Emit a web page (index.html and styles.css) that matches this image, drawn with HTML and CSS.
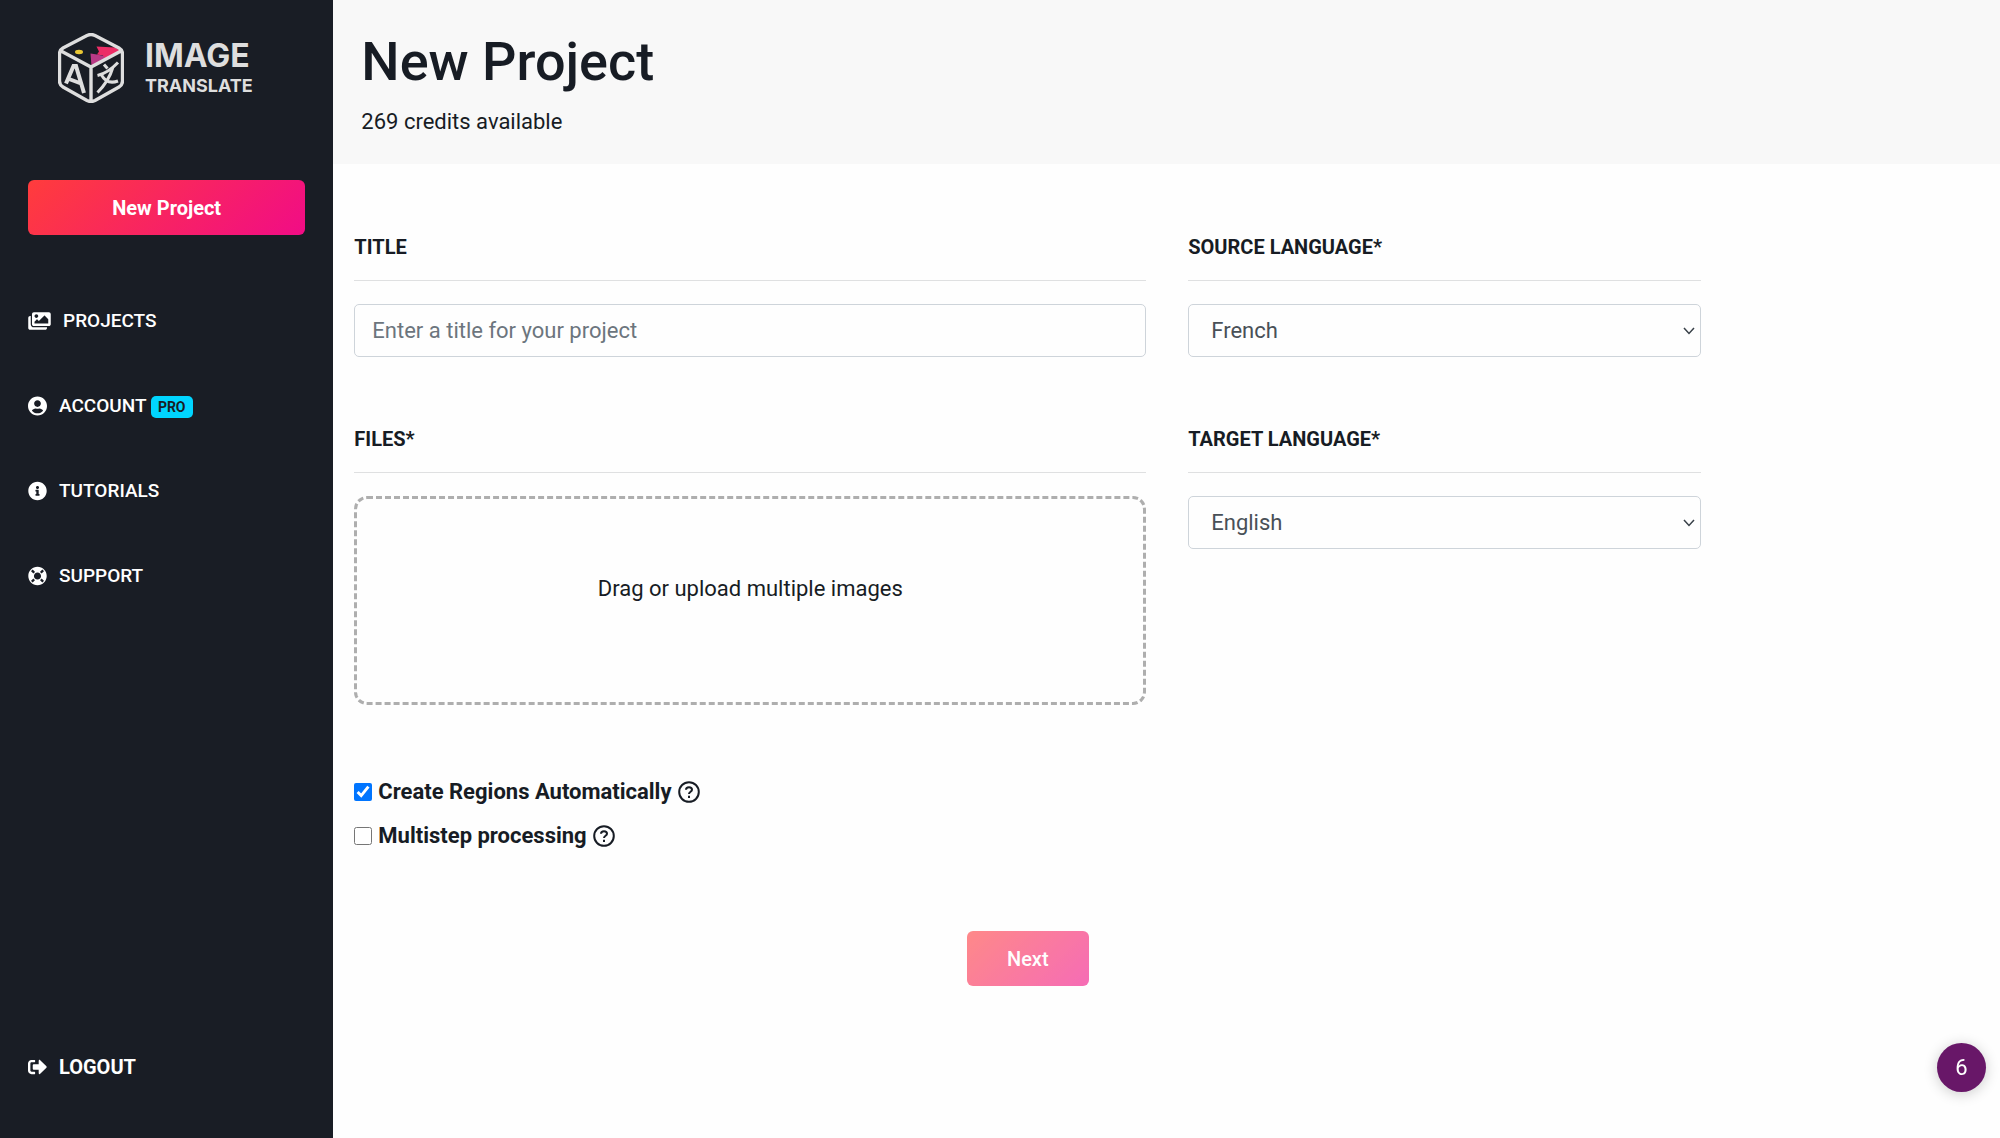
FILE: index.html
```html
<!DOCTYPE html>
<html lang="en">
<head>
<meta charset="UTF-8">
<meta name="viewport" content="width=device-width, initial-scale=1.0">
<title>Image Translate - New Project</title>
<link rel="stylesheet" href="styles.css">
</head>
<body>

<div class="layout">
    <aside class="sidebar">
        <a class="logo" href="#">
            <svg class="logo-mark" viewBox="0 0 66 70" aria-hidden="true">
                <path d="M38.500 13.500L57 14.500L63 18L46 27L45 22.500L39 21.500L41 18.500z" fill="#ec2d66"/>
                <path d="M32.500 20.500L39 21.500L46 23L47 26L33.500 33.500z" fill="#b93a86"/>
                <ellipse cx="21" cy="19" rx="4" ry="2.200" fill="#e9c734"/>
                <path d="M29 2.500Q33 .5 37 2.500L61 15Q64.500 17 64.500 21V48Q64.500 52 61 54L37 67.500Q33 69.500 29 67.500L5 54Q1.500 52 1.500 48V21Q1.500 17 5 15zM3 18L33 34L63 18M33 34V68" fill="none" stroke="#dedede" stroke-width="3.400"/>
                <path d="M8 50.500L15.500 33H18L26 60M11 46L23 50.500" fill="none" stroke="#dedede" stroke-width="4"/>
                <path d="M46 31.500L49.500 35.500M39.500 42.500Q50 40 60 29.500M55 34Q51 48 39.500 59.500M43.500 42Q49 52 60 48" fill="none" stroke="#dedede" stroke-width="3"/>
            </svg>
            <span class="logo-text">
                <span class="logo-top">IMAGE</span>
                <span class="logo-bottom">TRANSLATE</span>
            </span>
        </a>

        <button type="button" class="btn btn-new">New Project</button>

        <nav class="menu">
            <a href="#">
                <svg class="icon icon-wide" viewBox="0 0 576 512" aria-hidden="true"><path d="M480 416v16c0 26.510-21.490 48-48 48H48c-26.510 0-48-21.490-48-48V176c0-26.510 21.490-48 48-48h16v208c0 44.112 35.888 80 80 80h336zm96-80V80c0-26.510-21.490-48-48-48H144c-26.510 0-48 21.490-48 48v256c0 26.510 21.490 48 48 48h384c26.510 0 48-21.490 48-48zM256 128c0 26.510-21.490 48-48 48s-48-21.490-48-48 21.490-48 48-48 48 21.490 48 48zm-96 144l55.515-55.515c4.686-4.686 12.284-4.686 16.971 0L272 256l135.515-135.515c4.686-4.686 12.284-4.686 16.971 0L512 208v112H160v-48z"/></svg>
                <span>PROJECTS</span>
            </a>
            <a href="#">
                <svg class="icon" viewBox="0 0 496 512" aria-hidden="true"><path d="M248 8C111 8 0 119 0 256s111 248 248 248 248-111 248-248S385 8 248 8zm0 96c48.600 0 88 39.400 88 88s-39.400 88-88 88-88-39.400-88-88 39.400-88 88-88zm0 344c-58.700 0-111.300-26.600-146.500-68.200 18.800-35.400 55.600-59.800 98.500-59.800 2.400 0 4.800.4 7.100 1.100 13 4.200 26.600 6.900 40.900 6.900 14.300 0 28-2.700 40.900-6.900 2.300-.7 4.700-1.100 7.100-1.100 42.900 0 79.700 24.400 98.500 59.800C359.300 421.400 306.700 448 248 448z"/></svg>
                <span>ACCOUNT <span class="badge">PRO</span></span>
            </a>
            <a href="#">
                <svg class="icon" viewBox="0 0 512 512" aria-hidden="true"><path d="M256 8C119.043 8 8 119.083 8 256c0 136.997 111.043 248 248 248s248-111.003 248-248C504 119.083 392.957 8 256 8zm0 110c23.196 0 42 18.804 42 42s-18.804 42-42 42-42-18.804-42-42 18.804-42 42-42zm56 254c0 6.627-5.373 12-12 12h-88c-6.627 0-12-5.373-12-12v-24c0-6.627 5.373-12 12-12h12v-64h-12c-6.627 0-12-5.373-12-12v-24c0-6.627 5.373-12 12-12h64c6.627 0 12 5.373 12 12v100h12c6.627 0 12 5.373 12 12v24z"/></svg>
                <span>TUTORIALS</span>
            </a>
            <a href="#">
                <svg class="icon" viewBox="0 0 512 512" aria-hidden="true"><path d="M256 8C119.033 8 8 119.033 8 256s111.033 248 248 248 248-111.033 248-248S392.967 8 256 8zm173.696 119.559l-63.399 63.399c-10.987-18.559-26.670-34.252-45.255-45.255l63.399-63.399a218.396 218.396 0 0 1 45.255 45.255zM256 352c-53.019 0-96-42.981-96-96s42.981-96 96-96 96 42.981 96 96-42.981 96-96 96zM127.559 82.304l63.399 63.399c-18.559 10.987-34.252 26.670-45.255 45.255l-63.399-63.399a218.372 218.372 0 0 1 45.255-45.255zM82.304 384.441l63.399-63.399c10.987 18.559 26.670 34.252 45.255 45.255l-63.399 63.399a218.396 218.396 0 0 1-45.255-45.255zm302.137 45.255l-63.399-63.399c18.559-10.987 34.252-26.670 45.255-45.255l63.399 63.399a218.403 218.403 0 0 1-45.255 45.255z"/></svg>
                <span>SUPPORT</span>
            </a>
            <a class="logout" href="#">
                <svg class="icon" viewBox="0 0 512 512" aria-hidden="true"><path d="M497 273L329 441c-15 15-41 4.500-41-17v-96H152c-13.300 0-24-10.700-24-24v-96c0-13.300 10.700-24 24-24h136V88c0-21.400 25.900-32 41-17l168 168c9.300 9.400 9.300 24.600 0 34zM192 436v-40c0-6.600-5.400-12-12-12H96c-17.700 0-32-14.300-32-32V160c0-17.700 14.300-32 32-32h84c6.600 0 12-5.400 12-12V76c0-6.600-5.400-12-12-12H96c-53 0-96 43-96 96v192c0 53 43 96 96 96h84c6.600 0 12-5.400 12-12z"/></svg>
                <span>LOGOUT</span>
            </a>
        </nav>
    </aside>

    <main class="main">
        <header class="page-header">
            <h1>New Project</h1>
            <p>269 credits available</p>
        </header>

        <form class="project-form" id="projectForm">
            <div class="fields">
                <div class="field">
                    <label for="title">TITLE</label>
                    <input class="control" type="text" id="title" name="title" placeholder="Enter a title for your project">
                </div>
                <div class="field">
                    <label for="source">SOURCE LANGUAGE*</label>
                    <select class="control" id="source" name="source">
                        <option>French</option>
                        <option>English</option>
                    </select>
                </div>
                <div class="field">
                    <label for="files">FILES*</label>
                    <div class="dropzone">
                        <span>Drag or upload multiple images</span>
                        <input type="file" id="files" name="files" accept="image/*" multiple>
                    </div>
                </div>
                <div class="field">
                    <label for="target">TARGET LANGUAGE*</label>
                    <select class="control" id="target" name="target">
                        <option>English</option>
                        <option>French</option>
                    </select>
                </div>
            </div>

            <div class="options">
                <div class="option">
                    <input type="checkbox" id="regions" name="regions" checked>
                    <label for="regions">Create Regions Automatically</label>
                    <svg class="help" viewBox="0 0 22 22" aria-hidden="true"><circle cx="11" cy="11" r="9.800"/><path d="M8 8.800C8 5.400 14 5.400 14 8.800C14 10.800 11 10.800 11 13M11 14.800V17"/></svg>
                </div>
                <div class="option">
                    <input type="checkbox" id="multistep" name="multistep">
                    <label for="multistep">Multistep processing</label>
                    <svg class="help" viewBox="0 0 22 22" aria-hidden="true"><circle cx="11" cy="11" r="9.800"/><path d="M8 8.800C8 5.400 14 5.400 14 8.800C14 10.800 11 10.800 11 13M11 14.800V17"/></svg>
                </div>
            </div>

            <button type="submit" class="btn btn-next" disabled>Next</button>
        </form>
    </main>
</div>

<button type="button" class="chat">6</button>

</body>
</html>
```

FILE: styles.css
```css
* {
    box-sizing: border-box;
}
body {
    margin: 0;
    background-color: #fefefe;
    color: #171c24;
    font-family: Roboto, "Noto Sans", sans-serif;
    font-size: 22px;
    line-height: 32px;
}
a {
    color: #fff;
    text-decoration: none;
}
input, select, button {
    font-family: inherit;
}
.layout {
    display: grid;
    grid-template-columns: 1fr 5fr;
    min-height: 100vh;
}

/* Sidebar */
.sidebar {
    display: flex;
    flex-direction: column;
    padding: 33px 28px 55px;
    background-color: #191d25;
}
.logo {
    display: flex;
    align-items: center;
    gap: 21px;
    padding-left: 30px;
    margin-bottom: 77px;
    color: #dedede;
    font-family: Inter, sans-serif;
    font-weight: 700;
}
.logo-mark {
    width: 66px;
    height: 70px;
}
.logo-text {
    display: flex;
    flex-direction: column;
    padding-top: 4px;
}
.logo-top {
    font-size: 32px;
    line-height: 32px;
}
.logo-bottom {
    font-size: 18px;
    line-height: 28px;
}
.btn {
    height: 55px;
    border: none;
    border-radius: 6px;
    background-image: linear-gradient(135deg, #ff3c3c, #f10c86);
    color: #fff;
    font-size: 20px;
    cursor: pointer;
}
.btn-new {
    font-weight: 700;
}
.menu {
    display: flex;
    flex: 1;
    flex-direction: column;
    gap: 53px;
    padding-top: 70px;
    font-size: 19px;
    font-weight: 500;
}
.menu a {
    display: flex;
    align-items: center;
    gap: 12px;
}
.menu .logout {
    margin-top: auto;
    font-size: 20px;
    font-weight: 700;
}
.icon {
    width: 19px;
    height: 20px;
    fill: #fff;
}
.icon-wide {
    width: 23px;
}
.badge {
    display: inline-block;
    padding: 0 7px;
    border-radius: 5px;
    background-color: #00d5ff;
    color: #191d25;
    font-size: 14px;
    font-weight: 700;
    line-height: 22px;
}

/* Page */
.page-header {
    height: 164px;
    padding: 28px;
    background-color: #f8f8f8;
}
.page-header h1 {
    margin: 0 0 10px;
    font-size: 54px;
    font-weight: 500;
    line-height: 68px;
}
.page-header p {
    margin: 0;
}
.project-form {
    display: flex;
    flex-direction: column;
    width: 83.3333%;
    padding: 67px 21px;
}
.fields {
    display: grid;
    grid-template-columns: 792fr 513fr;
    gap: 66px 42px;
}
.field {
    display: flex;
    flex-direction: column;
    gap: 23px;
}
.field label {
    padding-bottom: 17px;
    border-bottom: 1px solid #dfe0e1;
    font-size: 20px;
    font-weight: 700;
}
.control {
    width: 100%;
    height: 53px;
    padding: 0 17px;
    border: 1px solid #ced4da;
    border-radius: 5px;
    background-color: #fefefe;
    color: #495057;
    font-size: 22px;
}
.control::placeholder {
    color: #6c757d;
    opacity: 1;
}
select.control {
    appearance: none;
    padding: 0 22px;
    background-image: url("data:image/svg+xml,%3Csvg xmlns='http://www.w3.org/2000/svg' width='12' height='8'%3E%3Cpath d='M1 1l5 5.500L11 1' fill='none' stroke='%23384048' stroke-width='1.500'/%3E%3C/svg%3E");
    background-repeat: no-repeat;
    background-position: right 5px center;
}
.dropzone {
    position: relative;
    display: flex;
    justify-content: center;
    height: 209px;
    padding-top: 74px;
    border: 3px dashed #aeaeae;
    border-radius: 13px;
}
.dropzone input {
    position: absolute;
    inset: 0;
    width: 100%;
    opacity: 0;
    cursor: pointer;
}
.options {
    display: flex;
    flex-direction: column;
    gap: 12px;
    padding-top: 71px;
    font-weight: 700;
}
.option {
    display: flex;
    align-items: center;
    gap: 6px;
}
.option input {
    width: 18px;
    height: 18px;
    margin: 0;
    accent-color: #0075ff;
}
.help {
    width: 22px;
    height: 22px;
    fill: none;
    stroke: #171c24;
    stroke-width: 2;
}
.btn-next {
    width: 122px;
    margin: 79px auto 0;
    font-weight: 500;
    opacity: 0.6;
}

/* Chat bubble, stays over the page */
.chat {
    position: fixed;
    right: 14px;
    bottom: 46px;
    width: 49px;
    height: 49px;
    padding: 0;
    border: none;
    border-radius: 50%;
    background-color: #681768;
    box-shadow: 0 2px 14px rgba(0, 0, 0, 0.2);
    color: #fff;
    font-size: 22px;
}
```
